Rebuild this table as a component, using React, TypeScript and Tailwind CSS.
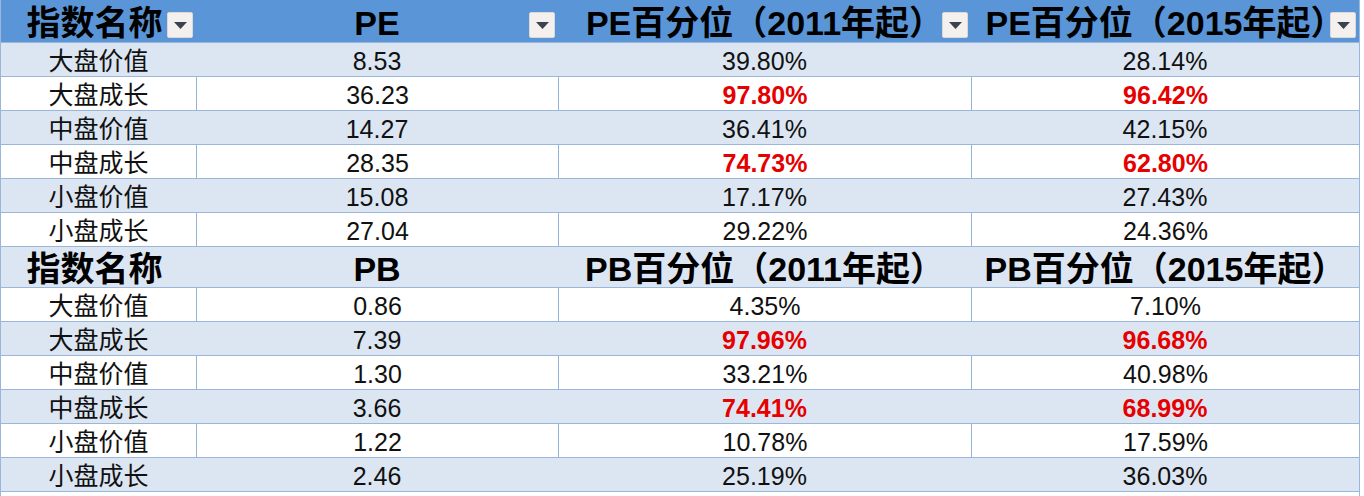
const pe = [
  ["大盘价值", "8.53", "39.80%", "28.14%", false],
  ["大盘成长", "36.23", "97.80%", "96.42%", true],
  ["中盘价值", "14.27", "36.41%", "42.15%", false],
  ["中盘成长", "28.35", "74.73%", "62.80%", true],
  ["小盘价值", "15.08", "17.17%", "27.43%", false],
  ["小盘成长", "27.04", "29.22%", "24.36%", false],
] as const;

const pb = [
  ["大盘价值", "0.86", "4.35%", "7.10%", false],
  ["大盘成长", "7.39", "97.96%", "96.68%", true],
  ["中盘价值", "1.30", "33.21%", "40.98%", false],
  ["中盘成长", "3.66", "74.41%", "68.99%", true],
  ["小盘价值", "1.22", "10.78%", "17.59%", false],
  ["小盘成长", "2.46", "25.19%", "36.03%", false],
] as const;

const grid = "grid grid-cols-[195px_362px_413px_388px]";

function Filter() {
  return (
    <span className="absolute right-[3px] bottom-[4px] w-[26px] h-[26px] bg-[#f4f0ee] border border-[#dcd8d6] rounded-[2px] flex items-center justify-center">
      <svg width="13" height="7" viewBox="0 0 13 7">
        <polygon points="0,0 13,0 6.5,7" fill="#3b414e" />
      </svg>
    </span>
  );
}

function HeadRow({ metric, filters }: { metric: string; filters: boolean }) {
  const cells = ["指数名称", metric, `${metric}百分位（2011年起）`, `${metric}百分位（2015年起）`];
  return (
    <div
      className={`${grid} border-b border-[#9ab6da] font-bold text-[34px] text-black ${
        filters ? "h-[43px] bg-[#5a96d7]" : "h-[41px] bg-[#dce6f2]"
      }`}
    >
      {cells.map((c, i) => (
        <div key={i} className="relative flex items-center justify-center pt-[4px] leading-none">
          <span className={i === 0 ? "pr-[8px]" : ""}>{c}</span>
          {filters && <Filter />}
        </div>
      ))}
    </div>
  );
}

function DataRow({ row, light }: { row: readonly (string | boolean)[]; light: boolean }) {
  const [name, v, p1, p2, hot] = row;
  const cell = `flex items-center justify-center pt-[3px] ${light ? "" : "border-l border-[#95b3d7] first:border-l-0"}`;
  const pct = hot ? "text-[#e60000] font-bold" : "text-[#111]";
  return (
    <div className={`${grid} h-[34px] border-b border-[#9ab6da] text-[25px] leading-none ${light ? "bg-[#dce6f2]" : "bg-white"}`}>
      <div className={cell}>{name}</div>
      <div className={cell}>{v}</div>
      <div className={`${cell} ${pct}`}>{p1}</div>
      <div className={`${cell} ${pct}`}>{p2}</div>
    </div>
  );
}

export default function App() {
  return (
    <div
      className="w-[1360px] h-[496px] border-x border-[#9ab6da] bg-white text-[#111] overflow-hidden"
      style={{ fontFamily: '"Liberation Sans", "Noto Sans CJK SC", sans-serif' }}
    >
      <HeadRow metric="PE" filters />
      {pe.map((r, i) => (
        <DataRow key={i} row={r} light={i % 2 === 0} />
      ))}
      <HeadRow metric="PB" filters={false} />
      {pb.map((r, i) => (
        <DataRow key={i} row={r} light={i % 2 === 1} />
      ))}
    </div>
  );
}
